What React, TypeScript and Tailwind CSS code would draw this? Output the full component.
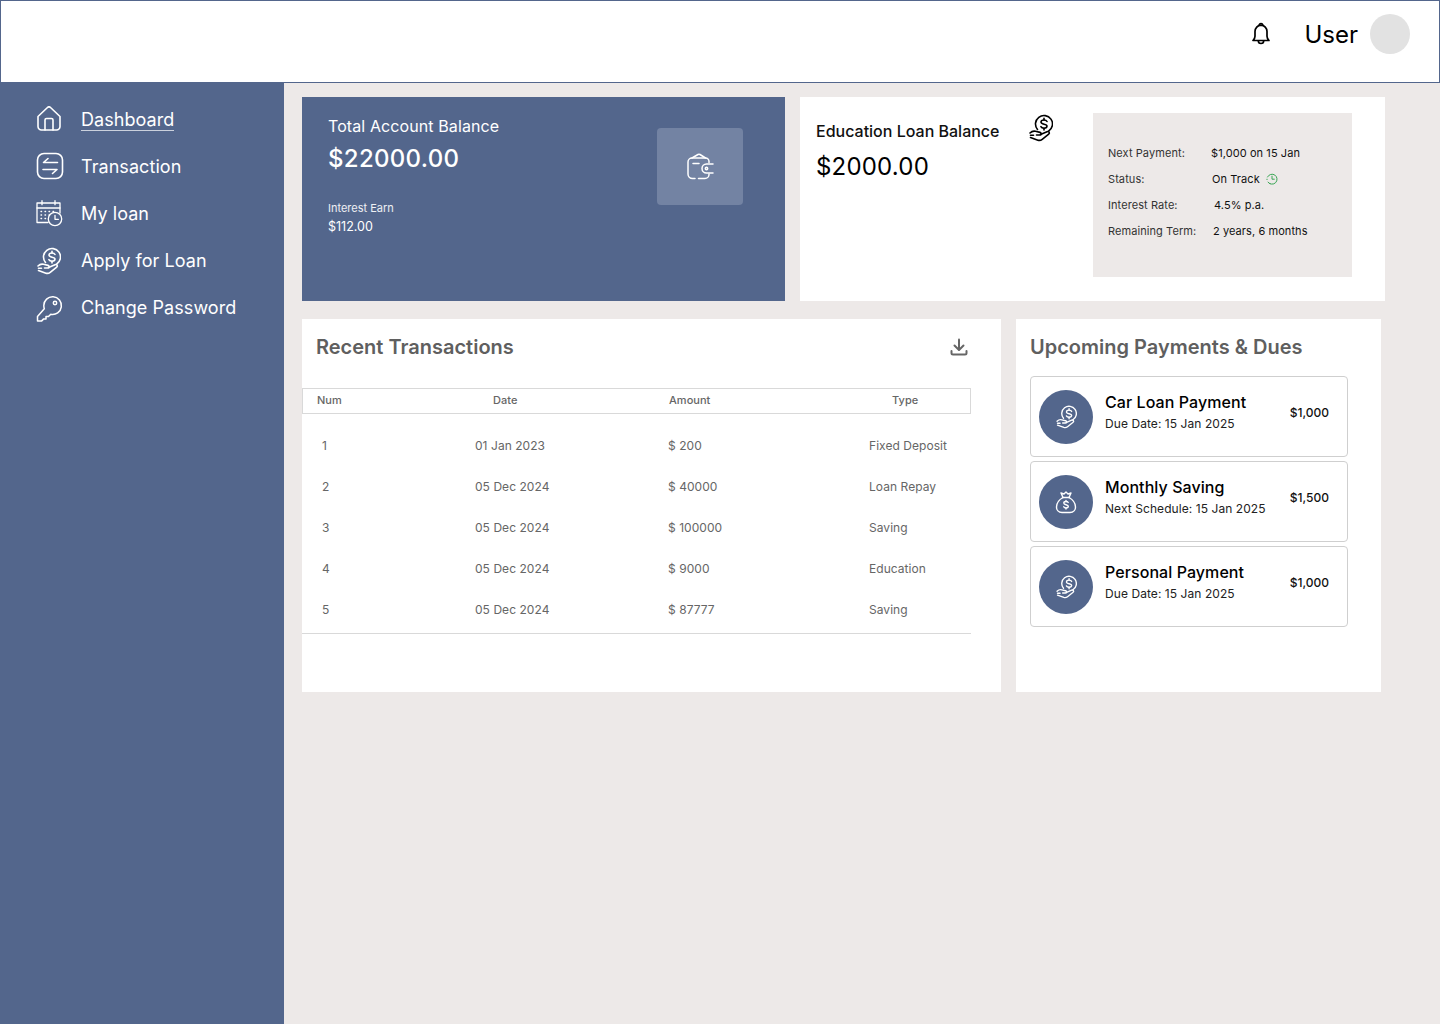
type IconProps = { className?: string };

function BellIcon({ className }: IconProps) {
  return (
    <svg viewBox="0 0 18 24" fill="none" stroke="currentColor" strokeWidth="1.7" strokeLinejoin="round" strokeLinecap="round" className={className}>
      <path d="M9 3.200a6.300 6.300 0 0 0-6 6.300v4.700c0 2-.8 3-2 4.300h16c-1.200-1.300-2-2.300-2-4.300V9.500a6.300 6.300 0 0 0-6-6.300z" />
      <path d="M7.300 3.200a1.700 1.700 0 0 1 3.400 0" />
      <path d="M6.300 18.800a2.700 2.700 0 0 0 5.400 0" />
    </svg>
  );
}

function DownloadIcon({ className }: IconProps) {
  return (
    <svg viewBox="0 0 20 20" fill="none" stroke="currentColor" strokeWidth="2" strokeLinejoin="round" strokeLinecap="round" className={className}>
      <path d="M10 2.500v10" />
      <path d="M5.500 8.500 10 13l4.500-4.500" />
      <path d="M2.500 14v2a1.500 1.500 0 0 0 1.500 1.500h12a1.500 1.500 0 0 0 1.500-1.500v-2" />
    </svg>
  );
}

function HomeIcon({ className }: IconProps) {
  return (
    <svg viewBox="0 0 24 25" fill="none" stroke="currentColor" strokeWidth="1.6" strokeLinejoin="round" strokeLinecap="round" className={className}>
      <path d="M1 10.500 10.500 1.500a2.200 2.200 0 0 1 3 0L23 10.500v10a3.500 3.500 0 0 1-3.500 3.500h-15A3.500 3.500 0 0 1 1 20.500z" />
      <path d="M8 24V14a1.500 1.500 0 0 1 1.500-1.500h5A1.500 1.500 0 0 1 16 14v10" />
    </svg>
  );
}

function TransferIcon({ className }: IconProps) {
  return (
    <svg viewBox="0 0 28 28" fill="none" stroke="currentColor" strokeWidth="1.6" strokeLinejoin="round" strokeLinecap="round" className={className}>
      <rect x="1.500" y="1.500" width="25" height="25" rx="6.500" />
      <path d="M21.500 10.500H7.500L12 6.500" />
      <path d="M7 17.500h14L16.500 21.500" />
    </svg>
  );
}

function CalendarClockIcon({ className }: IconProps) {
  return (
    <svg viewBox="0 0 28 28" fill="none" stroke="currentColor" strokeWidth="1.300" strokeLinejoin="round" strokeLinecap="round" className={className}>
      <path d="M12 22.500H1V3h23v10" />
      <path d="M1 8h23" />
      <path d="M6 .700v4M19 .700v4" />
      <path d="M5 11.500h.6M9 11.500h.6M13 11.500h.6M17 11.500h.6M5 15h.6M9 15h.6M13 15h.6M5 18.500h.6M9 18.500h.6" />
      <circle cx="19" cy="19" r="6.700" />
      <path d="M19 15.300v4h3.400" />
    </svg>
  );
}

function HandCoinIcon({ className }: IconProps) {
  return (
    <svg viewBox="0 0 24 28" fill="none" stroke="currentColor" strokeWidth="1.600" strokeLinejoin="round" strokeLinecap="round" className={className}>
      <path d="M8.500 15.500A8.500 8.500 0 1 1 19.500 17.200" />
      <path d="M18 7.500c-.5-1-1.500-1.500-3-1.500-1.700 0-3 .8-3 2.100 0 2.900 6 1.300 6 4 0 1.300-1.300 2.200-3 2.200-1.500 0-2.600-.6-3.100-1.600" />
      <path d="M15 4.200V6M15 14.300V16" />
      <path d="M1 19c1.500-1.500 3.500-2.200 5.500-1.700l4.500 1.100c1.500.4 1.500 2.600-.2 2.600H7.500" />
      <path d="M11.500 20.500l6.500-2.800c1.800-.8 3.200 1.200 1.700 2.400l-6.500 5.200c-1.200 1-2.800 1.300-4.300.9L1.500 23.500" />
      <path d="M1.500 21.300h3" />
    </svg>
  );
}

function KeyIcon({ className }: IconProps) {
  return (
    <svg viewBox="0 0 28 28" fill="none" stroke="currentColor" strokeWidth="1.500" strokeLinejoin="round" strokeLinecap="round" className={className}>
      <path d="M7.800 11.600a8.800 8.800 0 1 1 7 8.600l-2.300 2.300H10v2.400H7.700l-2 2H1.500v-4.300l6.800-7.800Q7.800 13.200 7.800 11.600z" />
      <circle cx="19" cy="9" r="1.700" />
    </svg>
  );
}

function WalletIcon({ className }: IconProps) {
  return (
    <svg viewBox="0 0 28 28" fill="none" stroke="currentColor" strokeWidth="1.500" strokeLinejoin="round" strokeLinecap="round" className={className}>
      <path d="M23 9.500V8.500a3.500 3.500 0 0 0-3.500-3.500H6A4 4 0 0 0 2 9v12a4.500 4.500 0 0 0 4.500 4.500H9" />
      <path d="M12.500 25.500H19a4 4 0 0 0 4-4v-.5" />
      <path d="M6 5l6-3.500a2 2 0 0 1 2 0L19.500 5" />
      <path d="M7 10.500h6" />
      <path d="M27 11h-6.500a4.500 4.500 0 0 0 0 9H27" />
      <circle cx="20.500" cy="15.500" r="1.200" />
    </svg>
  );
}

function MoneyBagIcon({ className }: IconProps) {
  return (
    <svg viewBox="0 0 24 24" fill="none" stroke="currentColor" strokeWidth="1.400" strokeLinejoin="round" strokeLinecap="round" className={className}>
      <path d="M9 7.500C5.500 9.500 2.500 13 2.500 17c0 3 2 5.500 5.500 5.500h8c3.500 0 5.500-2.500 5.500-5.500 0-4-3-7.500-6.500-9.500" />
      <path d="M8.500 7.500h7" />
      <path d="M9 7.500 7 3l3 1 2-2 2 2 3-1-2 4.500" />
      <path d="M14.200 12.500c-.4-.7-1.200-1-2.200-1-1.200 0-2.200.6-2.200 1.600 0 2.200 4.500 1 4.500 3.200 0 1-1 1.700-2.300 1.700-1 0-1.900-.4-2.300-1.200" />
      <path d="M12 10.500v1M12 18v1" />
    </svg>
  );
}

function ClockIcon({ className }: IconProps) {
  return (
    <svg viewBox="0 0 12 12" fill="none" stroke="currentColor" strokeWidth="1" strokeLinecap="round" className={className}>
      <path d="M1.500 4A5 5 0 1 1 2 9.200" />
      <path d="M6 3.200v3h2.300" />
      <path d="M3.500 10.400l.5.300M1 6.200v.4" />
    </svg>
  );
}

const navItems = [
  { label: "Dashboard", icon: HomeIcon, iconClass: "ml-px -mt-[2px] h-[25px] w-[24px]", active: true },
  { label: "Transaction", icon: TransferIcon, iconClass: "-mt-[2px] h-[28px] w-[28px]" },
  { label: "My loan", icon: CalendarClockIcon, iconClass: "h-[28px] w-[28px]" },
  { label: "Apply for Loan", icon: HandCoinIcon, iconClass: "ml-px h-[28px] w-[24px]" },
  { label: "Change Password", icon: KeyIcon, iconClass: "h-[28px] w-[28px]" },
];

const loanDetails = [
  { label: "Next Payment:", value: "$1,000 on 15 Jan", offset: "ml-0" },
  { label: "Status:", value: "On Track", offset: "ml-px", clock: true },
  { label: "Interest Rate:", value: "4.5% p.a.", offset: "ml-[3px]" },
  { label: "Remaining Term:", value: "2 years, 6 months", offset: "ml-[2px]" },
];

const transactions = [
  ["1", "01 Jan 2023", "$ 200", "Fixed Deposit"],
  ["2", "05 Dec 2024", "$ 40000", "Loan Repay"],
  ["3", "05 Dec 2024", "$ 100000", "Saving"],
  ["4", "05 Dec 2024", "$ 9000", "Education"],
  ["5", "05 Dec 2024", "$ 87777", "Saving"],
];

const payments = [
  { title: "Car Loan Payment", sub: "Due Date: 15 Jan 2025", amount: "$1,000", icon: HandCoinIcon, iconClass: "h-[24px] w-[21px]" },
  { title: "Monthly Saving", sub: "Next Schedule: 15 Jan 2025", amount: "$1,500", icon: MoneyBagIcon, iconClass: "h-[24px] w-[24px]" },
  { title: "Personal Payment", sub: "Due Date: 15 Jan 2025", amount: "$1,000", icon: HandCoinIcon, iconClass: "h-[24px] w-[21px]" },
];

export default function App() {
  return (
    <div className="flex h-[1024px] w-[1440px] flex-col overflow-hidden bg-[#ede9e8] font-['Inter',sans-serif]">
      {/* Top bar */}
      <header className="flex h-[83px] shrink-0 items-center justify-end border border-[#53668c] bg-white pr-[29px] pb-[16px]">
        <BellIcon className="h-[24px] w-[18px] text-black" />
        <span className="mt-[2px] ml-[34px] text-[24px] leading-none text-black">User</span>
        <div className="ml-[12px] h-[40px] w-[40px] rounded-full bg-[#e2e2e2]" />
      </header>

      <div className="flex min-h-0 flex-1">
        {/* Sidebar */}
        <aside className="w-[284px] shrink-0 bg-[#53668c] pt-[13px] pl-[36px] text-white">
          {navItems.map((item) => (
            <div key={item.label} className="flex h-[47px] items-center gap-[17px]">
              <div className="flex w-[28px] shrink-0">
                <item.icon className={item.iconClass} />
              </div>
              <span
                className={`text-[18px] tracking-[0.06px] ${
                  item.active ? "mt-[2px] border-b border-white/70 leading-[20px]" : "leading-[24px]"
                }`}
              >
                {item.label}
              </span>
            </div>
          ))}
        </aside>

        {/* Main */}
        <main className="flex-1 pt-[14px] pl-[18px]">
          <div className="flex gap-[15px]">
            <section className="flex h-[204px] w-[483px] justify-between bg-[#53668c] pt-[19px] pr-[42px] pl-[26px] text-white">
              <div>
                <div className="text-[16px] leading-[20px] tracking-[0.1px]">Total Account Balance</div>
                <div className="mt-[8px] text-[24px] leading-[30px] font-medium tracking-[0.3px]">$22000.00</div>
                <div className="mt-[27px] text-[11px] leading-[14px] text-white/90">Interest Earn</div>
                <div className="mt-[3px] text-[12.500px] leading-[18px]">$112.00</div>
              </div>
              <div className="mt-[12px] flex h-[77px] w-[86px] items-center justify-center rounded-[4px] bg-[#7383a3]">
                <WalletIcon className="h-[28px] w-[28px]" />
              </div>
            </section>

            <section className="flex h-[204px] w-[585px] bg-white pt-[16px] pl-[16px] text-black">
              <div className="w-[277px]">
                <div className="flex items-start">
                  <div className="mt-[8px] w-[213px] text-[16px] leading-[20px] font-medium text-[#111]">Education Loan Balance</div>
                  <HandCoinIcon className="mt-px h-[28px] w-[24px]" />
                </div>
                <div className="mt-[10px] text-[24px] leading-[30px] font-normal tracking-[0.2px]">$2000.00</div>
              </div>
              <div className="flex h-[164px] w-[259px] flex-col justify-center bg-[#ede9e8] pb-[6px] pl-[15px]">
                {loanDetails.map((row) => (
                  <div key={row.label} className="flex h-[26px] items-center text-[11px] tracking-[0.08px]">
                    <span className="w-[103px] text-[#333]">{row.label}</span>
                    <span className={`flex items-center gap-[6px] text-[#111] ${row.offset}`}>
                      {row.value}
                      {row.clock && <ClockIcon className="h-[12px] w-[12px] text-[#3aa655]" />}
                    </span>
                  </div>
                ))}
              </div>
            </section>
          </div>

          <div className="mt-[18px] flex gap-[15px]">
            <section className="h-[373px] w-[699px] bg-white">
              <div className="flex h-[69px] items-start justify-between pt-[16px] pr-[32px] pl-[14px]">
                <h2 className="text-[20px] leading-[24px] font-semibold text-[#5f5f5f]">Recent Transactions</h2>
                <DownloadIcon className="mt-[2px] h-[20px] w-[20px] text-[#666]" />
              </div>
              <div className="w-[669px]">
                <div className="grid h-[26px] grid-cols-[176px_176px_223px_1fr] items-center border border-[#d9d9d9] pb-[2px] pl-[14px] text-[11px] font-medium tracking-[0.03px] text-[#666]">
                  <span>Num</span>
                  <span>Date</span>
                  <span>Amount</span>
                  <span>Type</span>
                </div>
                <div className="border-b border-[#d9d9d9] pt-[11px] pb-[3px]">
                  {transactions.map((row) => (
                    <div key={row[0]} className="grid h-[41px] grid-cols-[153px_193px_201px_1fr] items-center pl-[20px] text-[12px] tracking-[0.05px] text-[#666]">
                      {row.map((cell) => (
                        <span key={cell}>{cell}</span>
                      ))}
                    </div>
                  ))}
                </div>
              </div>
            </section>

            <section className="h-[373px] w-[365px] bg-white pt-[16px] pl-[14px]">
              <h2 className="text-[20px] leading-[24px] font-semibold text-[#5f5f5f]">Upcoming Payments &amp; Dues</h2>
              <div className="mt-[17px] flex w-[318px] flex-col gap-[4px]">
                {payments.map((p) => (
                  <div key={p.title} className="flex h-[81px] items-center rounded-[4px] border border-[#cfcfcf] pr-[18px] pl-[8px]">
                    <div className="flex h-[54px] w-[54px] shrink-0 items-center justify-center rounded-full bg-[#53668c] text-white">
                      <p.icon className={p.iconClass} />
                    </div>
                    <div className="-mt-[9px] ml-[12px] flex-1">
                      <div className="text-[16px] leading-[20px] font-medium tracking-[0.07px] text-black">{p.title}</div>
                      <div className="mt-[4px] text-[12px] leading-[16px] tracking-[0.07px] text-[#222]">{p.sub}</div>
                    </div>
                    <span className="-mt-[7px] text-[12px] font-medium text-[#111]">{p.amount}</span>
                  </div>
                ))}
              </div>
            </section>
          </div>
        </main>
      </div>
    </div>
  );
}
